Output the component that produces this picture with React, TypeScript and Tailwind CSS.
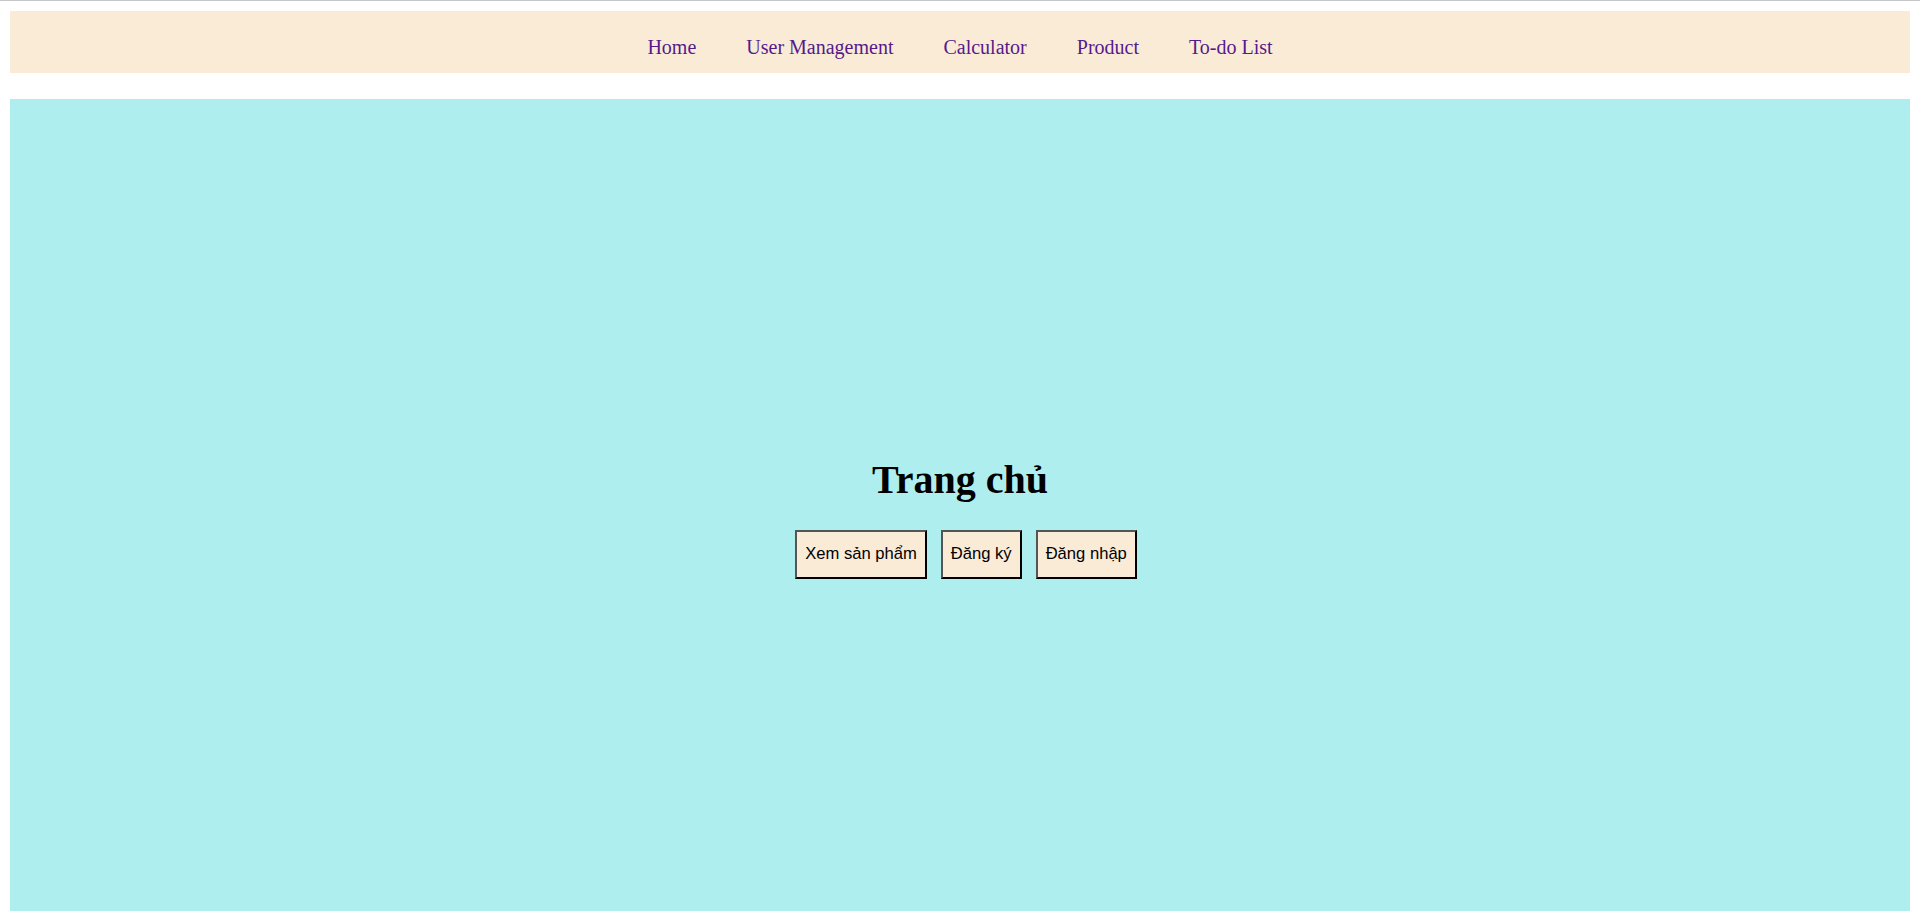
import React, { FC } from 'react';

const links = ['Home', 'User Management', 'Calculator', 'Product', 'To-do List'];
const actions = ['Xem sản phẩm', 'Đăng ký', 'Đăng nhập'];

const NavBar: FC = () => (
  <nav className="h-[62px] bg-[#faebd7] pt-[25px] flex justify-center gap-[50px]">
    {links.map((l) => (
      <a key={l} href="#" className="text-[20px] leading-[23px] text-[#551a8b] font-['Liberation_Serif','Times_New_Roman',serif]">
        {l}
      </a>
    ))}
  </nav>
);

const App: FC = () => {
  return (
    <div className="w-full h-[922px] border-t border-[#c6c6c6] px-[10px] pt-[10px] pb-[11px] bg-white flex flex-col">
      <NavBar />
      <main className="mt-[26px] h-[812px] bg-[#afeeee] flex flex-col items-center justify-center">
        <h1 className="mt-[26.8px] mb-[20px] text-[40px] leading-normal font-bold text-black font-['Liberation_Serif','Times_New_Roman',serif]">
          Trang chủ
        </h1>
        <div className="flex gap-[14px] mb-[7px] pl-[12px]">
          {actions.map((a) => (
            <button
              key={a}
              className="h-[49px] px-[8px] bg-[#faebd7] border-2 border-t-[#555] border-l-[#555] border-r-black border-b-black text-[16.6px] text-black font-['Liberation_Sans',Arial,sans-serif]"
            >
              {a}
            </button>
          ))}
        </div>
      </main>
    </div>
  );
};

export default App;
